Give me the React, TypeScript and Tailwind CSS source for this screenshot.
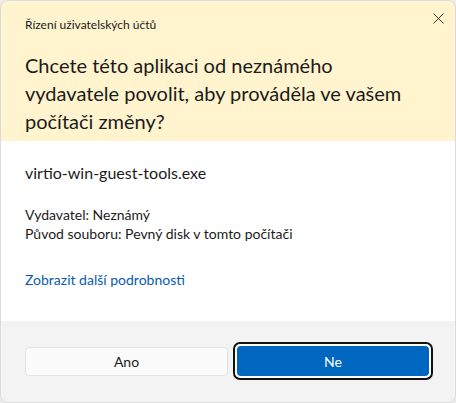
import { X } from "lucide-react"

const font = { fontFamily: '"Segoe UI", Lato, "Noto Sans", sans-serif' }

export default function App() {
    return (
        <div className="h-[403px] w-[456px] bg-[#ebebeb]" style={font}>
            <div className="flex h-full w-full flex-col overflow-hidden rounded-[8px] border border-[#dcdcdc] text-[#1b1b1b]">
                <header className="relative bg-[#fff4ce] pb-[6px] pl-[24px] pr-[24px] pt-[16px]">
                    <p className="text-[12px] leading-[16px]">Řízení uživatelských účtů</p>
                    <h1 className="mt-[18px] text-[20px] leading-[28px]">
                        Chcete této aplikaci od neznámého
                        <br />
                        vydavatele povolit, aby prováděla ve vašem
                        <br />
                        počítači změny?
                    </h1>
                    <button className="absolute right-[1px] top-[1px] flex h-[32px] w-[32px] items-center justify-center text-[#1b1b1b]">
                        <X className="h-[19px] w-[19px]" strokeWidth={1.1} />
                    </button>
                </header>

                <section className="flex-1 bg-white pl-[24px] pt-[21px]">
                    <p className="text-[16px] leading-[22px]">virtio-win-guest-tools.exe</p>
                    <div className="mt-[21px] text-[14px] leading-[19px]">
                        <p>Vydavatel: Neznámý</p>
                        <p>Původ souboru: Pevný disk v tomto počítači</p>
                    </div>
                    <a href="#" className="mt-[27px] block text-[14px] leading-[19px] text-[#0a5cb0]">
                        Zobrazit další podrobnosti
                    </a>
                </section>

                <footer className="flex h-[81px] items-center bg-[#f3f3f3] pb-[1px] pl-[24px]">
                    <button className="h-[29px] w-[203px] rounded-[4px] border border-[#e3e3e3] bg-[#fbfbfb] text-[14px] text-[#1b1b1b]">
                        Ano
                    </button>
                    <div className="ml-[5px] h-[38px] w-[200px] rounded-[7px] border-2 border-[#111] bg-white p-[2px]">
                        <button className="h-full w-full rounded-[4px] bg-[#0067c0] text-[14px] text-white">
                            Ne
                        </button>
                    </div>
                </footer>
            </div>
        </div>
    )
}
